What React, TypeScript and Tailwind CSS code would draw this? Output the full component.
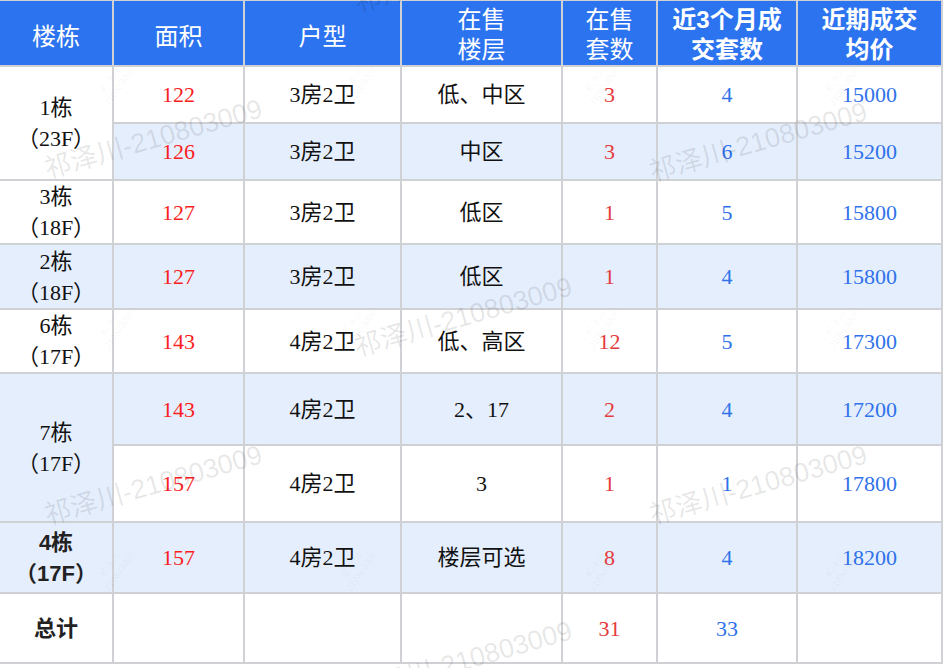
import React from "react";

type Row = {
  building?: string;
  floors?: string;
  span?: number;
  strong?: boolean;
  area: string;
  layout: string;
  onSaleFloor: string;
  onSale: string;
  recent: string;
  price: string;
  blue: boolean;
  height: string;
};

const rows: Row[] = [
  { building: "1栋", floors: "（23F）", span: 2, area: "122", layout: "3房2卫", onSaleFloor: "低、中区", onSale: "3", recent: "4", price: "15000", blue: false, height: "h-[57px]" },
  { area: "126", layout: "3房2卫", onSaleFloor: "中区", onSale: "3", recent: "6", price: "15200", blue: true, height: "h-[57px]" },
  { building: "3栋", floors: "（18F）", area: "127", layout: "3房2卫", onSaleFloor: "低区", onSale: "1", recent: "5", price: "15800", blue: false, height: "h-[64px]" },
  { building: "2栋", floors: "（18F）", area: "127", layout: "3房2卫", onSaleFloor: "低区", onSale: "1", recent: "4", price: "15800", blue: true, height: "h-[65px]" },
  { building: "6栋", floors: "（17F）", area: "143", layout: "4房2卫", onSaleFloor: "低、高区", onSale: "12", recent: "5", price: "17300", blue: false, height: "h-[64px]" },
  { building: "7栋", floors: "（17F）", span: 2, area: "143", layout: "4房2卫", onSaleFloor: "2、17", onSale: "2", recent: "4", price: "17200", blue: true, height: "h-[72px]" },
  { area: "157", layout: "4房2卫", onSaleFloor: "3", onSale: "1", recent: "1", price: "17800", blue: false, height: "h-[77px]" },
  { building: "4栋", floors: "（17F）", strong: true, area: "157", layout: "4房2卫", onSaleFloor: "楼层可选", onSale: "8", recent: "4", price: "18200", blue: true, height: "h-[71px]" },
];

const cell = "border-r-2 border-b-2 border-[#d0d1d5] text-center align-middle p-0";
const th = `${cell} bg-[#2c73f0] text-white text-[24px] leading-[30px] font-['Liberation_Sans','Noto_Sans_CJK_SC',sans-serif]`;

// big diagonal watermark, anchored at its left-centre
const marks = [
  { x: "left-[45px]", y: "top-[157px]" },
  { x: "left-[45px]", y: "top-[503px]" },
  { x: "left-[355px]", y: "top-[-9px]" },
  { x: "left-[355px]", y: "top-[335px]" },
  { x: "left-[355px]", y: "top-[679px]" },
  { x: "left-[650px]", y: "top-[160px]" },
  { x: "left-[650px]", y: "top-[503px]" },
];

// small faint stamps
const stamps = [
  "left-[92px] top-[72px]", "left-[334px] top-[72px]", "left-[577px] top-[72px]", "left-[817px] top-[72px]",
  "left-[92px] top-[315px]", "left-[334px] top-[315px]", "left-[577px] top-[315px]", "left-[817px] top-[315px]",
  "left-[92px] top-[557px]", "left-[334px] top-[557px]", "left-[577px] top-[557px]", "left-[817px] top-[557px]",
];

export default function App() {
  return (
    <div className="relative w-[946px] h-[668px] overflow-hidden bg-white">
      <table className="table-fixed w-[943px] border-separate border-spacing-0 border-t border-[#d0d1d5] font-['Liberation_Serif','Noto_Sans_CJK_SC',serif] text-[22px] text-[#111]">
        <colgroup>
          <col className="w-[114px]" />
          <col className="w-[131px]" />
          <col className="w-[157px]" />
          <col className="w-[161px]" />
          <col className="w-[95px]" />
          <col className="w-[140px]" />
          <col className="w-[145px]" />
        </colgroup>
        <thead>
          <tr>
            <th className={`${th} h-[66px] pt-[8px] font-normal`}>楼栋</th>
            <th className={`${th} pt-[8px] font-normal`}>面积</th>
            <th className={`${th} pt-[8px] font-normal`}>户型</th>
            <th className={`${th} pt-[4px] font-normal`}>
              在售
              <br />
              楼层
            </th>
            <th className={`${th} pt-[4px] font-normal`}>
              在售
              <br />
              套数
            </th>
            <th className={`${th} pt-[4px] font-bold`}>
              近3个月成
              <br />
              交套数
            </th>
            <th className={`${th} pt-[4px] font-bold`}>
              近期成交
              <br />
              均价
            </th>
          </tr>
        </thead>
        <tbody>
          {rows.map((r, i) => {
            const bg = r.blue ? "bg-[#e5eefd]" : "bg-white";
            return (
              <tr key={i}>
                {r.building && (
                  <td rowSpan={r.span ?? 1} className={`${cell} ${bg} leading-[31px]`}>
                    {r.strong ? (
                      <span className="font-bold font-['Liberation_Sans','Noto_Sans_CJK_SC',sans-serif] text-[#222]">
                        {r.building}
                        <br />
                        {r.floors}
                      </span>
                    ) : (
                      <>
                        {r.building}
                        <br />
                        {r.floors}
                      </>
                    )}
                  </td>
                )}
                <td className={`${cell} ${bg} ${r.height} text-[#fa1e1e]`}>{r.area}</td>
                <td className={`${cell} ${bg}`}>{r.layout}</td>
                <td className={`${cell} ${bg}`}>{r.onSaleFloor}</td>
                <td className={`${cell} ${bg} text-[#e43b3b]`}>{r.onSale}</td>
                <td className={`${cell} ${bg} text-[#2f72ea]`}>{r.recent}</td>
                <td className={`${cell} ${bg} text-[#2f72ea]`}>{r.price}</td>
              </tr>
            );
          })}
          <tr>
            <td className={`${cell} h-[70px] bg-white font-bold font-['Liberation_Sans','Noto_Sans_CJK_SC',sans-serif] text-[#222]`}>
              总计
            </td>
            <td className={`${cell} bg-white`}></td>
            <td className={`${cell} bg-white`}></td>
            <td className={`${cell} bg-white`}></td>
            <td className={`${cell} bg-white text-[#e43b3b]`}>31</td>
            <td className={`${cell} bg-white text-[#2f72ea]`}>33</td>
            <td className={`${cell} bg-white`}></td>
          </tr>
        </tbody>
      </table>

      {marks.map((m, i) => (
        <span
          key={i}
          className={`pointer-events-none absolute ${m.x} ${m.y} origin-left -rotate-[16deg] whitespace-nowrap text-[27px] leading-[26px] text-black/10 font-['Liberation_Sans','Noto_Sans_CJK_SC',sans-serif]`}
        >
          祁泽川-210803009
        </span>
      ))}
      {stamps.map((s, i) => (
        <span
          key={i}
          className={`pointer-events-none absolute ${s} -rotate-[55deg] whitespace-nowrap text-center text-[9px] leading-[11px] text-black/[0.05] font-['Noto_Sans_CJK_SC',sans-serif]`}
        >
          祁泽川
          <br />
          210803009
        </span>
      ))}
    </div>
  );
}
